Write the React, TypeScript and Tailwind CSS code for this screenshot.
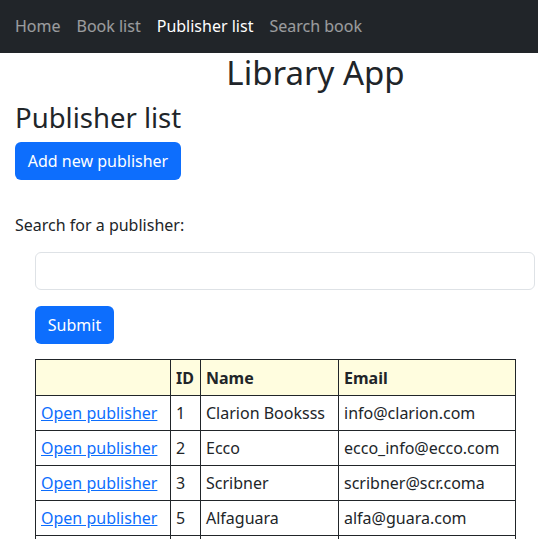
import React from 'react';

const publishers = [
  { id: 1, name: 'Clarion Booksss', email: 'info@clarion.com' },
  { id: 2, name: 'Ecco', email: 'ecco_info@ecco.com' },
  { id: 3, name: 'Scribner', email: 'scribner@scr.coma' },
  { id: 5, name: 'Alfaguara', email: 'alfa@guara.com' },
  { id: 6, name: 'Penguin', email: 'info@penguin.com' },
];

const App: React.FC = () => {
  const links = ['Home', 'Book list', 'Publisher list', 'Search book'];

  return (
    <div className="min-h-screen bg-white text-[#212529] text-base" style={{ fontFamily: '"Noto Sans", sans-serif' }}>
      {/* Navbar */}
      <nav className="h-[53px] bg-[#212529] flex items-center pl-[7px] pb-[2px]">
        {links.map((link) => (
          <a
            key={link}
            href="#"
            className={`px-2 leading-6 ${link === 'Publisher list' ? 'text-white' : 'text-white/55'}`}
          >
            {link}
          </a>
        ))}
      </nav>

      <div className="px-[15px]">
        <h1 className="mt-[1px] pl-[93px] text-center text-[33px] leading-[38px] font-normal">Library App</h1>
        <h2 className="mt-[9px] text-[27.5px] leading-[33px] font-normal">Publisher list</h2>
        <button className="mt-[8px] h-[38px] w-[166px] rounded-md bg-[#0d6efd] text-white leading-6">
          Add new publisher
        </button>

        <p className="mt-[33px] leading-6">Search for a publisher:</p>

        <div className="ml-[20px] mt-[15px]">
          <input
            type="text"
            className="block w-[500px] h-[38px] rounded-md border border-[#dee2e6] bg-white px-3 outline-none"
          />
          <button className="mt-4 h-[38px] w-[79px] rounded-md bg-[#0d6efd] text-white leading-6">Submit</button>

          <table className="mt-[15px] w-[480px] border-collapse table-fixed">
            <colgroup>
              <col className="w-[135px]" />
              <col className="w-[30px]" />
              <col className="w-[138px]" />
              <col className="w-[177px]" />
            </colgroup>
            <thead>
              <tr className="bg-[#fffddf] h-[36px]">
                <th className="border border-[#212529] px-[5px] text-left font-bold"></th>
                <th className="border border-[#212529] px-[5px] text-left font-bold">ID</th>
                <th className="border border-[#212529] px-[5px] text-left font-bold">Name</th>
                <th className="border border-[#212529] px-[5px] text-left font-bold">Email</th>
              </tr>
            </thead>
            <tbody>
              {publishers.map((p) => (
                <tr key={p.id} className="h-[35px]">
                  <td className="border border-[#212529] px-[5px] whitespace-nowrap">
                    <a href="#" className="text-[#0d6efd] underline">Open publisher</a>
                  </td>
                  <td className="border border-[#212529] px-[5px]">{p.id}</td>
                  <td className="border border-[#212529] px-[5px] whitespace-nowrap">{p.name}</td>
                  <td className="border border-[#212529] px-[5px] whitespace-nowrap">{p.email}</td>
                </tr>
              ))}
            </tbody>
          </table>
        </div>
      </div>
    </div>
  );
};

export default App;
